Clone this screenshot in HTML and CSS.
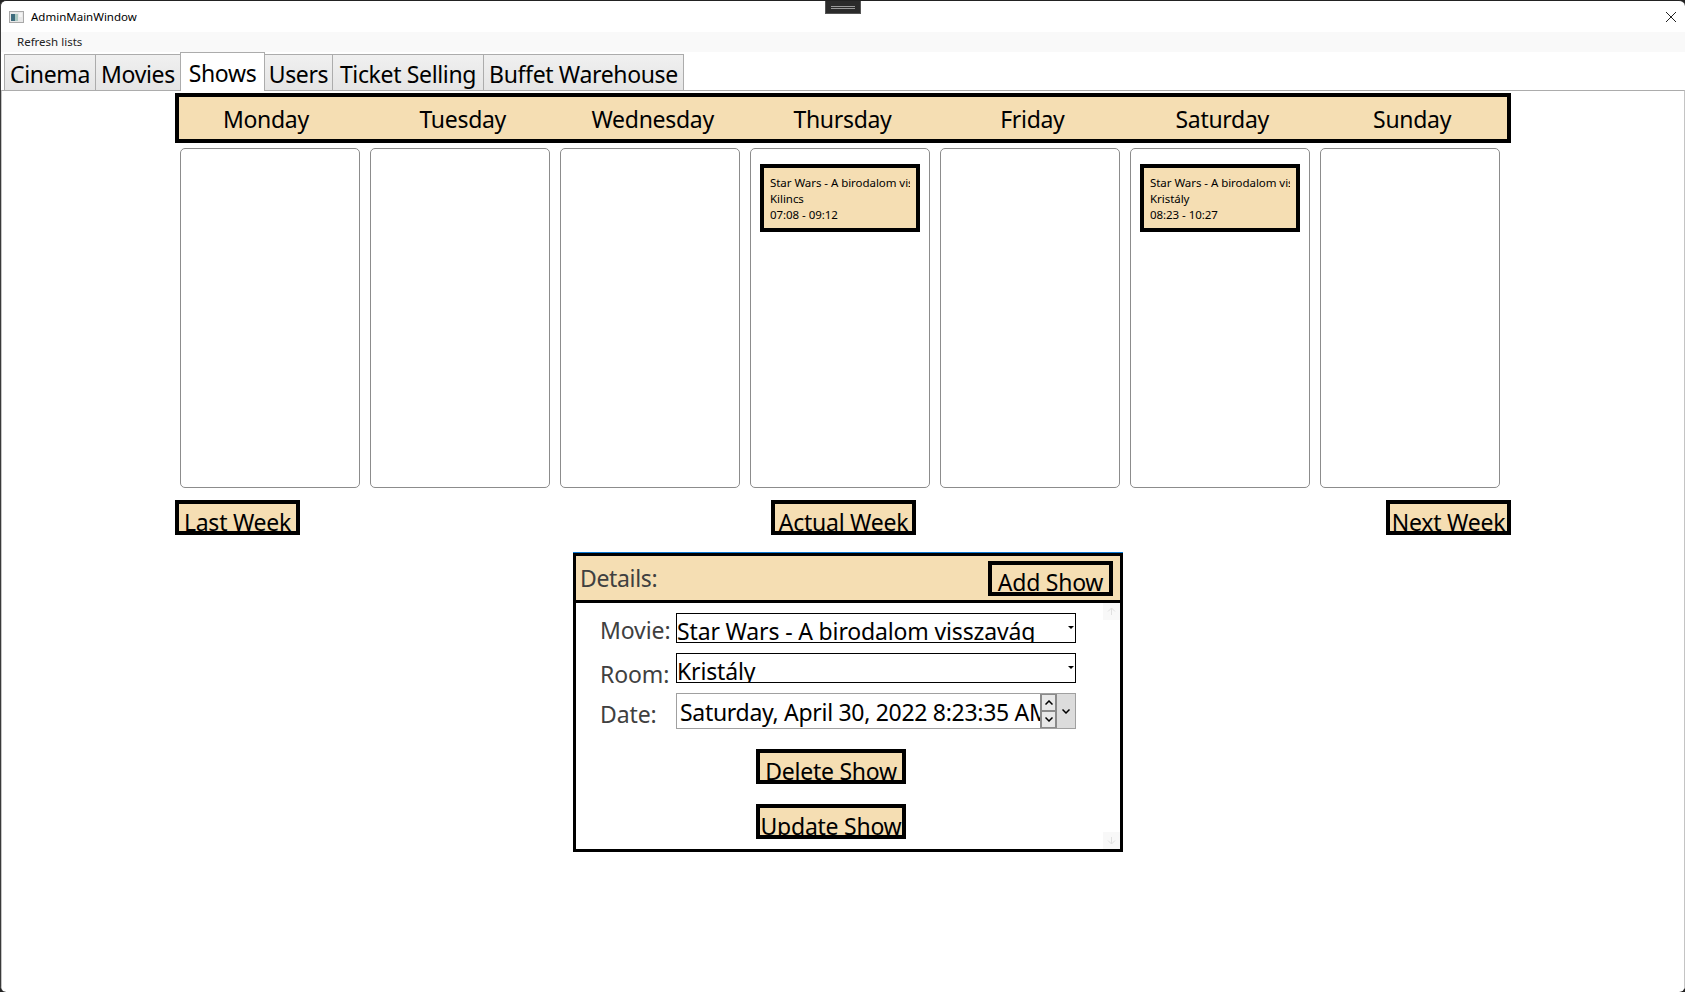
FILE: index.html
```html
<!DOCTYPE html>
<html lang="en">
<head>
    <meta charset="UTF-8">
    <meta name="viewport" content="width=device-width, initial-scale=1.0">
    <title>AdminMainWindow</title>
    <link rel="stylesheet" href="styles.css">
</head>
<body>
    <div class="window">
        <!-- title bar -->
        <div class="titlebar">
            <svg class="app-icon" width="15" height="12" viewBox="0 0 15 12">
                <rect x="0.5" y="0.5" width="14" height="11" fill="#e8e8e8" stroke="#a8a8a8"/>
                <rect x="2" y="3" width="4" height="7" fill="#3d6b7c"/>
                <rect x="6" y="3" width="3" height="7" fill="#a9c7c0"/>
                <rect x="10" y="2" width="3" height="4" fill="#f4f4f4"/>
            </svg>
            <span class="app-title">AdminMainWindow</span>
            <div class="snap-handle"><span></span></div>
            <svg class="close-icon" width="12" height="12" viewBox="0 0 12 12">
                <path d="M1 1 L11 11 M11 1 L1 11" stroke="#222" stroke-width="1" fill="none"/>
            </svg>
        </div>
        <div class="menubar"><span>Refresh lists</span></div>

        <!-- tabs -->
        <div class="tabs">
            <div class="tab tab-cinema">Cinema</div>
            <div class="tab tab-movies">Movies</div>
            <div class="tab tab-shows active">Shows</div>
            <div class="tab tab-users">Users</div>
            <div class="tab tab-tickets">Ticket Selling</div>
            <div class="tab tab-buffet">Buffet Warehouse</div>
        </div>

        <div class="panel">
            <div class="week">
                <div class="day-header">
                    <div class="day first">Monday</div>
                    <div class="day">Tuesday</div>
                    <div class="day">Wednesday</div>
                    <div class="day">Thursday</div>
                    <div class="day">Friday</div>
                    <div class="day">Saturday</div>
                    <div class="day">Sunday</div>
                </div>

                <div class="day-columns">
                    <div class="day-column"></div>
                    <div class="day-column"></div>
                    <div class="day-column"></div>
                    <div class="day-column">
                        <div class="show-card">
                            <div class="show-text">
                                <div>Star Wars - A birodalom visszavág</div>
                                <div>Kilincs</div>
                                <div>07:08 - 09:12</div>
                            </div>
                        </div>
                    </div>
                    <div class="day-column"></div>
                    <div class="day-column">
                        <div class="show-card">
                            <div class="show-text">
                                <div>Star Wars - A birodalom visszavág</div>
                                <div>Kristály</div>
                                <div>08:23 - 10:27</div>
                            </div>
                        </div>
                    </div>
                    <div class="day-column"></div>
                </div>

                <div class="week-nav">
                    <button class="btn">Last Week</button>
                    <button class="btn actual">Actual Week</button>
                    <button class="btn">Next Week</button>
                </div>

                <!-- details -->
                <div class="details">
                    <div class="details-head">
                        <span>Details:</span>
                        <button class="btn add">Add Show</button>
                    </div>
                    <div class="details-body">
                        <div class="form">
                            <div class="row">
                                <label class="movie-label">Movie:</label>
                                <div class="select">
                                    <span>Star Wars - A birodalom visszavág</span>
                                    <svg width="6" height="3" viewBox="0 0 6 3"><path d="M0 0 H6 L3 3 Z" fill="#000"/></svg>
                                </div>
                            </div>
                            <div class="row">
                                <label class="room-label">Room:</label>
                                <div class="select">
                                    <span>Kristály</span>
                                    <svg width="6" height="3" viewBox="0 0 6 3"><path d="M0 0 H6 L3 3 Z" fill="#000"/></svg>
                                </div>
                            </div>
                            <div class="row row-date">
                                <label class="date-label">Date:</label>
                                <div class="datepicker">
                                    <span class="date-text">Saturday, April 30, 2022 8:23:35 AM</span>
                                    <div class="spinner">
                                        <div class="spin">
                                            <svg width="8" height="5" viewBox="0 0 8 5"><path d="M0.5 4.5 L4 1 L7.5 4.5" stroke="#000" stroke-width="1.5" fill="none"/></svg>
                                        </div>
                                        <div class="spin">
                                            <svg width="8" height="5" viewBox="0 0 8 5"><path d="M0.5 0.5 L4 4 L7.5 0.5" stroke="#000" stroke-width="1.5" fill="none"/></svg>
                                        </div>
                                    </div>
                                    <div class="drop">
                                        <svg width="8" height="5" viewBox="0 0 8 5"><path d="M0.5 0.5 L4 4 L7.5 0.5" stroke="#000" stroke-width="1.5" fill="none"/></svg>
                                    </div>
                                </div>
                            </div>
                            <div class="actions">
                                <button class="btn action">Delete Show</button>
                                <button class="btn action">Update Show</button>
                            </div>
                        </div>
                        <div class="scrollbar">
                            <div class="scroll-btn">
                                <svg width="9" height="9" viewBox="0 0 9 9"><path d="M4.5 8 V1 M1 4.5 L4.5 1 L8 4.5" stroke="#e0e0e0" fill="none"/></svg>
                            </div>
                            <div class="scroll-btn">
                                <svg width="9" height="9" viewBox="0 0 9 9"><path d="M4.5 1 V8 M1 4.5 L4.5 8 L8 4.5" stroke="#e0e0e0" fill="none"/></svg>
                            </div>
                        </div>
                    </div>
                </div>
            </div>
        </div>
    </div>
</body>
</html>
```

FILE: styles.css
```css
* {
    box-sizing: border-box;
}

body {
    margin: 0;
    background: #222;
    font-family: "Noto Sans", "Open Sans", sans-serif;
    color: #000;
}

.window {
    height: 992px;
    display: flex;
    flex-direction: column;
    overflow: hidden;
    background: #fff;
    border-top: 1px solid #222;
    border-left: 1px solid #3a3a3a;
    border-radius: 6px;
}

.titlebar {
    height: 31px;
    display: flex;
    align-items: center;
    padding: 0 8px 0 8px;
    position: relative;
    font-size: 11.5px;
}

.app-icon {
    margin-right: 7px;
}

.snap-handle {
    position: absolute;
    left: 824px;
    top: 0;
    width: 36px;
    height: 13px;
    background: #2b2b2b;
    border: 1px solid #555;
    border-top: 0;
    display: flex;
    align-items: center;
    justify-content: center;
}

.snap-handle span {
    width: 24px;
    height: 3px;
    border-top: 1px solid #999;
    border-bottom: 1px solid #999;
}

.close-icon {
    margin-left: auto;
}

.menubar {
    height: 20px;
    background: #f9f9f9;
    padding-left: 16px;
    font-size: 11.5px;
    line-height: 20px;
    color: #222;
}

.tabs {
    height: 38px;
    display: flex;
    align-items: flex-end;
    padding-left: 3px;
    font-size: 23px;
    letter-spacing: -0.35px;
}

.tab {
    height: 36px;
    text-align: center;
    line-height: 38px;
    margin-right: -1px;
    background: linear-gradient(#f0f0f0, #e5e5e5);
    border: 1px solid #acacac;
    border-bottom: 0;
    white-space: nowrap;
    overflow: hidden;
}

.tab-cinema { width: 92px; }
.tab-movies { width: 86px; }
.tab-shows { width: 85px; }
.tab-users { width: 69px; }
.tab-tickets { width: 152px; }
.tab-buffet { width: 201px; }

.tab.active {
    height: 39px;
    line-height: 41px;
    margin-bottom: -1px;
    background: #fff;
    position: relative;
    z-index: 1;
}

.panel {
    flex: 1;
    border: 1px solid #c4c4c4;
    border-bottom: 0;
    border-top-color: #acacac;
    padding: 2px 0 0 173px;
}

.week {
    width: 1336px;
}

.day-header {
    height: 50px;
    display: flex;
    background: #f5deb3;
    border: 4px solid #000;
    font-size: 23px;
    letter-spacing: -0.3px;
}

.day {
    width: 190px;
    text-align: center;
    line-height: 44px;
}

.day.first {
    margin: 0 7px 0 -8px;
}

.day-columns {
    display: flex;
    gap: 10px;
    margin-top: 5px;
    padding-left: 5px;
}

.day-column {
    width: 180px;
    height: 340px;
    padding: 15px 9px 0 9px;
    border: 1px solid #8c8c8c;
    border-radius: 5px;
}

.show-card {
    height: 68px;
    padding: 7px 6px 0 6px;
    background: #f5deb3;
    border: 4px solid #000;
    font-size: 11.5px;
    line-height: 16px;
    letter-spacing: -0.05px;
    white-space: nowrap;
}

.show-text {
    overflow: hidden;
}

.btn {
    display: block;
    margin: 0;
    padding: 0;
    height: 35px;
    background: #f5deb3;
    border: 4px solid #000;
    font-family: inherit;
    font-size: 23px;
    line-height: 36px;
    letter-spacing: -0.25px;
    color: #000;
    overflow: hidden;
    white-space: nowrap;
}

.week-nav {
    display: flex;
    justify-content: space-between;
    margin-top: 12px;
}

.week-nav .btn {
    width: 125px;
}

.week-nav .btn.actual {
    width: 145px;
    margin-left: 1px;
}

.details {
    width: 550px;
    height: 299px;
    margin: 18px 0 0 398px;
    border: 3px solid #000;
    box-shadow: 0 -1px 0 #0a78d4;
    display: flex;
    flex-direction: column;
}

.details-head {
    height: 47px;
    flex: none;
    display: flex;
    align-items: center;
    justify-content: space-between;
    padding: 0 7px 0 4px;
    background: #f5deb3;
    border-bottom: 3px solid #000;
    font-size: 23px;
    letter-spacing: -0.35px;
    color: #404040;
}

.btn.add {
    width: 125px;
    line-height: 34px;
}

.details-body {
    flex: 1;
    display: flex;
    justify-content: space-between;
}

.form {
    width: 500px;
    padding: 10px 0 0 24px;
}

.row {
    display: flex;
    height: 30px;
    margin-bottom: 10px;
}

.row-date {
    height: 36px;
}

.row label {
    width: 76px;
    flex: none;
    font-size: 23px;
    letter-spacing: -0.1px;
    color: #404040;
}

.movie-label {
    line-height: 34px;
}

.room-label {
    line-height: 42px;
}

.date-label {
    line-height: 43px;
}

.select {
    width: 400px;
    height: 30px;
    border: 1px solid #000;
    display: flex;
    justify-content: space-between;
    font-size: 23px;
    line-height: 35px;
    letter-spacing: -0.15px;
    overflow: hidden;
    white-space: nowrap;
}

.select svg {
    margin: 12px 1px 0 0;
}

.datepicker {
    width: 400px;
    height: 36px;
    display: flex;
    border: 1px solid #a0a0a0;
    font-size: 23px;
    line-height: 36px;
    letter-spacing: -0.3px;
}

.date-text {
    flex: 1;
    min-width: 0;
    padding-left: 3px;
    overflow: hidden;
    white-space: nowrap;
}

.spinner {
    width: 17px;
    display: flex;
    flex-direction: column;
    border: 1px solid #8a8a8a;
    border-width: 1px 2px;
}

.spin {
    flex: 1;
    display: flex;
    align-items: center;
    justify-content: center;
    background: #e8e8e8;
}

.spin + .spin {
    border-top: 2px solid #8a8a8a;
}

.drop {
    width: 18px;
    background: #dcdcdc;
    display: flex;
    align-items: center;
    justify-content: center;
}

.actions {
    display: flex;
    flex-direction: column;
    gap: 20px;
    padding: 10px 0 0 156px;
}

.btn.action {
    width: 150px;
}

.scrollbar {
    width: 17px;
    display: flex;
    flex-direction: column;
    justify-content: space-between;
}

.scroll-btn {
    height: 17px;
    background: #f8f8f8;
    display: flex;
    align-items: center;
    justify-content: center;
}
```
